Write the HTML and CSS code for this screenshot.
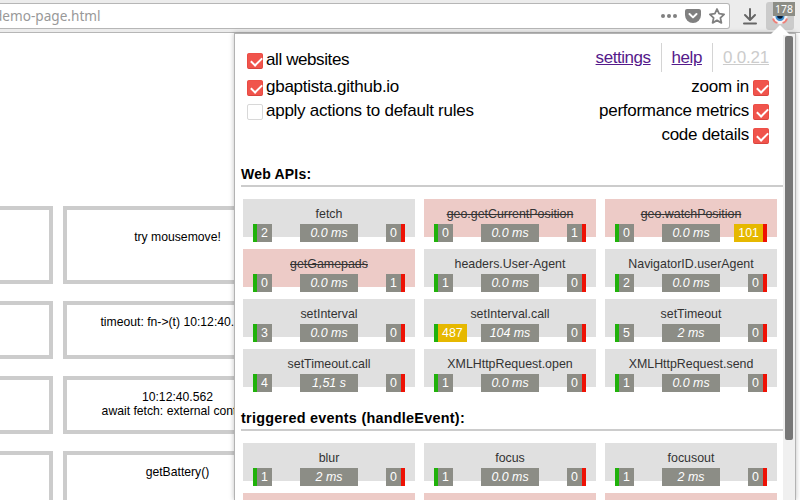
FILE: index.html
```
<!DOCTYPE html>
<html lang="en">
<head>
<meta charset="utf-8">
<title>Demo page</title>
<link rel="stylesheet" href="styles.css">
</head>
<body>
<header class="toolbar">
  <div class="urlbar">
    <span class="url">demo-page.html</span>
    <svg class="dots" width="16" height="6" viewBox="0 0 16 6"><circle cx="2" cy="3" r="2"/><circle cx="8" cy="3" r="2"/><circle cx="14" cy="3" r="2"/></svg>
    <svg class="pocket" width="16" height="16" viewBox="0 0 16 16"><path d="M2 1h12a2 2 0 0 1 2 2v4a8 8 0 0 1-16 0V3a2 2 0 0 1 2-2z"/><path class="chev" d="M4.500 6 8 9.400 11.500 6"/></svg>
    <svg class="star" width="16" height="16" viewBox="0 0 16 16"><path d="M8 1l2.100 4.700 5 .6-3.700 3.500 1 5.100L8 12.400l-4.400 2.500 1-5.100L.9 6.300l5-.6z"/></svg>
  </div>
  <svg class="download" width="16" height="17" viewBox="0 0 16 17"><path d="M8 1v10M3 7l5 5 5-5M2 15.500h12"/></svg>
  <div class="ext">
    <svg width="16" height="16" viewBox="0 0 16 16"><path d="M.5 6Q8-2 15.500 6q0 7-7.500 8Q.5 13 .5 6z" fill="#f7f3f5"/><circle cx="8" cy="6.500" r="4.500" fill="#3f8fd0"/><circle cx="8" cy="6" r="2.800" fill="#071b35"/><path d="M1 8.500q.8 3.500 4.500 4.500M15 8.500q-.8 3.500-4.500 4.500" fill="none" stroke="#ee7f78" stroke-width="1.800"/></svg>
    <span class="count">178</span>
  </div>
</header>
<main class="demo">
  <div class="box tall"></div><div class="box tall">try mousemove!</div>
  <div class="box"></div><div class="box">timeout: fn-&gt;(t) 10:12:40.562</div>
  <div class="box"></div><div class="box">10:12:40.562<br>await fetch: external content</div>
  <div class="box"></div><div class="box">getBattery()</div>
</main>
<aside class="popup">
  <svg class="arrow" width="20" height="10" viewBox="0 0 20 10"><path d="M0 10 10 0l10 10z"/></svg>
  <div class="content">
    <div class="top">
      <div class="left">
        <label class="first"><i class="check on"></i>all websites</label>
        <label><i class="check on"></i>gbaptista.github.io</label>
        <label><i class="check"></i>apply actions to default rules</label>
      </div>
      <div class="right">
        <nav><a>settings</a><a>help</a><a class="version">0.0.21</a></nav>
        <label>zoom in<i class="check on"></i></label>
        <label>performance metrics<i class="check on"></i></label>
        <label>code details<i class="check on"></i></label>
      </div>
    </div>
    <h2>Web APIs:</h2>
    <div class="grid">
      <div class="card"><b>fetch</b><div class="stats"><span class="ok">2</span><em>0.0 ms</em><span class="no">0</span></div></div>
      <div class="card blocked"><b>geo.getCurrentPosition</b><div class="stats"><span class="ok">0</span><em>0.0 ms</em><span class="no">1</span></div></div>
      <div class="card blocked"><b>geo.watchPosition</b><div class="stats"><span class="ok">0</span><em>0.0 ms</em><span class="no hot">101</span></div></div>
      <div class="card blocked"><b>getGamepads</b><div class="stats"><span class="ok">0</span><em>0.0 ms</em><span class="no">1</span></div></div>
      <div class="card"><b>headers.User-Agent</b><div class="stats"><span class="ok">1</span><em>0.0 ms</em><span class="no">0</span></div></div>
      <div class="card"><b>NavigatorID.userAgent</b><div class="stats"><span class="ok">2</span><em>0.0 ms</em><span class="no">0</span></div></div>
      <div class="card"><b>setInterval</b><div class="stats"><span class="ok">3</span><em>0.0 ms</em><span class="no">0</span></div></div>
      <div class="card"><b>setInterval.call</b><div class="stats"><span class="ok hot">487</span><em>104 ms</em><span class="no">0</span></div></div>
      <div class="card"><b>setTimeout</b><div class="stats"><span class="ok">5</span><em>2 ms</em><span class="no">0</span></div></div>
      <div class="card"><b>setTimeout.call</b><div class="stats"><span class="ok">4</span><em>1,51 s</em><span class="no">0</span></div></div>
      <div class="card"><b>XMLHttpRequest.open</b><div class="stats"><span class="ok">1</span><em>0.0 ms</em><span class="no">0</span></div></div>
      <div class="card"><b>XMLHttpRequest.send</b><div class="stats"><span class="ok">1</span><em>0.0 ms</em><span class="no">0</span></div></div>
    </div>
    <h2 class="events">triggered events (handleEvent):</h2>
    <div class="grid">
      <div class="card"><b>blur</b><div class="stats"><span class="ok">1</span><em>2 ms</em><span class="no">0</span></div></div>
      <div class="card"><b>focus</b><div class="stats"><span class="ok">1</span><em>0.0 ms</em><span class="no">0</span></div></div>
      <div class="card"><b>focusout</b><div class="stats"><span class="ok">1</span><em>2 ms</em><span class="no">0</span></div></div>
      <div class="card blocked"></div><div class="card blocked"></div><div class="card blocked"></div>
    </div>
  </div>
  <div class="scroll"><div class="thumb"></div></div>
</aside>
</body>
</html>
```
FILE: styles.css
```
* { box-sizing: border-box; }
body {
  margin: 0;
  width: 800px;
  height: 500px;
  overflow: hidden;
  position: relative;
  background: #fff;
  color: #000;
  font-family: "Liberation Sans", Arial, sans-serif;
}
svg { display: block; flex: none; }

.toolbar {
  height: 33px;
  display: flex;
  align-items: flex-start;
  background: #ececec;
  border-bottom: 1px solid #b6b6b6;
}
.urlbar {
  width: 730px;
  height: 26px;
  margin-top: 3px;
  padding-right: 4px;
  display: flex;
  align-items: center;
  background: #fff;
  border: 1px solid #b6b6b6;
  border-left: 0;
  border-radius: 0 3px 3px 0;
}
.url {
  flex: 1;
  margin-left: -6px;
  color: #999;
  font: 13.6px/24px "Noto Sans", sans-serif;
}
.dots, .pocket { fill: #808080; }
.pocket { margin: 0 8px; }
.chev { fill: none; stroke: #fff; stroke-width: 2; stroke-linecap: round; stroke-linejoin: round; }
.star { fill: none; stroke: #808080; stroke-width: 1.8; stroke-linejoin: round; }
.download { margin: 8px 8px 0 12px; fill: none; stroke: #666; stroke-width: 2; stroke-linecap: round; stroke-linejoin: round; }
.ext {
  position: relative;
  width: 28px;
  height: 28px;
  margin-top: 2px;
  padding: 8px 6px;
  border-radius: 3px;
  background: #cbcbcb;
}
.count {
  position: absolute;
  left: 7px;
  top: 0;
  width: 22px;
  height: 14px;
  background: #8c8d86;
  color: #fff;
  font: 10.5px/14px "Noto Sans", sans-serif;
  text-align: center;
}

.demo {
  width: 468px;
  height: 467px;
  margin-left: -176px;
  padding-top: 173px;
  overflow: hidden;
  display: grid;
  grid-template-columns: 229px 229px;
  column-gap: 10px;
  row-gap: 17px;
}
.box {
  height: 58px;
  padding-top: 10px;
  border: 4px solid #ccc;
  font-size: 12.2px;
  line-height: 14px;
  text-align: center;
  white-space: nowrap;
}
.tall { height: 78px; padding-top: 20px; }

.popup {
  position: absolute;
  left: 234px;
  top: 33px;
  width: 562px;
  height: 467px;
  display: flex;
  background: #fff;
  border: 1px solid #b3b3b3;
  border-bottom: 0;
  box-shadow: 0 0 5px rgba(0, 0, 0, .25);
}
.arrow { position: absolute; left: 535px; top: -9px; fill: #fff; }
.content { width: 548px; padding: 8px 0 0 6px; overflow: hidden; }
.scroll { flex: 1; padding: 2px; background: #f0f0f0; }
.thumb { width: 8px; height: 404px; border-radius: 2px; background: #777; }

.top {
  height: 119px;
  padding: 0 14px 0 6px;
  display: flex;
  justify-content: space-between;
  font-size: 17px;
  letter-spacing: -.26px;
}
.left label, .right label { display: flex; height: 24px; line-height: 22px; white-space: nowrap; }
.left { padding-top: 7px; }
.left .first { height: 27px; letter-spacing: -.4px; }
.left .check { margin-right: 3px; }
.right label { justify-content: flex-end; }
.right .check { margin-left: 4px; }
.check {
  position: relative;
  width: 16px;
  height: 16px;
  margin-top: 4px;
  border: 1px solid #d8d8d8;
  border-radius: 2px;
  background: #fff;
}
.on { background: #f0544c; border-color: #ee5048 #e94b43 #d8453e; }
.on::after {
  content: "";
  position: absolute;
  left: 2.5px;
  top: 2.5px;
  width: 9px;
  height: 5px;
  border: solid #fff;
  border-width: 0 0 2px 2px;
  transform: rotate(-45deg);
}
nav { height: 34px; padding-top: 1px; display: flex; justify-content: flex-end; }
nav a {
  height: 29px;
  padding: 0 10px;
  border-right: 1px solid #d4d4d4;
  color: #551a8b;
  line-height: 29px;
  letter-spacing: -.45px;
  text-decoration: underline;
}
nav .version { padding-right: 0; border: 0; color: #ccc; letter-spacing: -.2px; }

h2 {
  height: 26px;
  margin: 0;
  font-size: 14px;
  line-height: 26px;
  letter-spacing: .2px;
  border-bottom: 2px solid #ccc;
}
.events { font-size: 14.4px; letter-spacing: .26px; }
.grid {
  padding: 12px 0 18px 2px;
  display: grid;
  grid-template-columns: repeat(3, 172px);
  gap: 12px 9px;
}
.card {
  height: 38px;
  padding-top: 7px;
  background: #e0e0e0;
  color: #333;
  font-size: 12.4px;
  text-align: center;
}
.card b { display: block; height: 18px; font-weight: 400; line-height: 16px; }
.blocked { background: #edcbc7; }
.blocked b { text-decoration: line-through; }
.stats {
  display: grid;
  grid-template-columns: 1fr 58px 1fr;
  padding: 0 10px;
  color: #fff;
  line-height: 18px;
}
.stats span, .stats em { height: 18px; background: #8c8d86; }
.stats span { padding: 0 4px; }
.ok { justify-self: start; border-left: 4px solid #20b20b; }
.no { justify-self: end; border-right: 4px solid #ee1205; }
.stats .hot { background: #e6b800; }
```
